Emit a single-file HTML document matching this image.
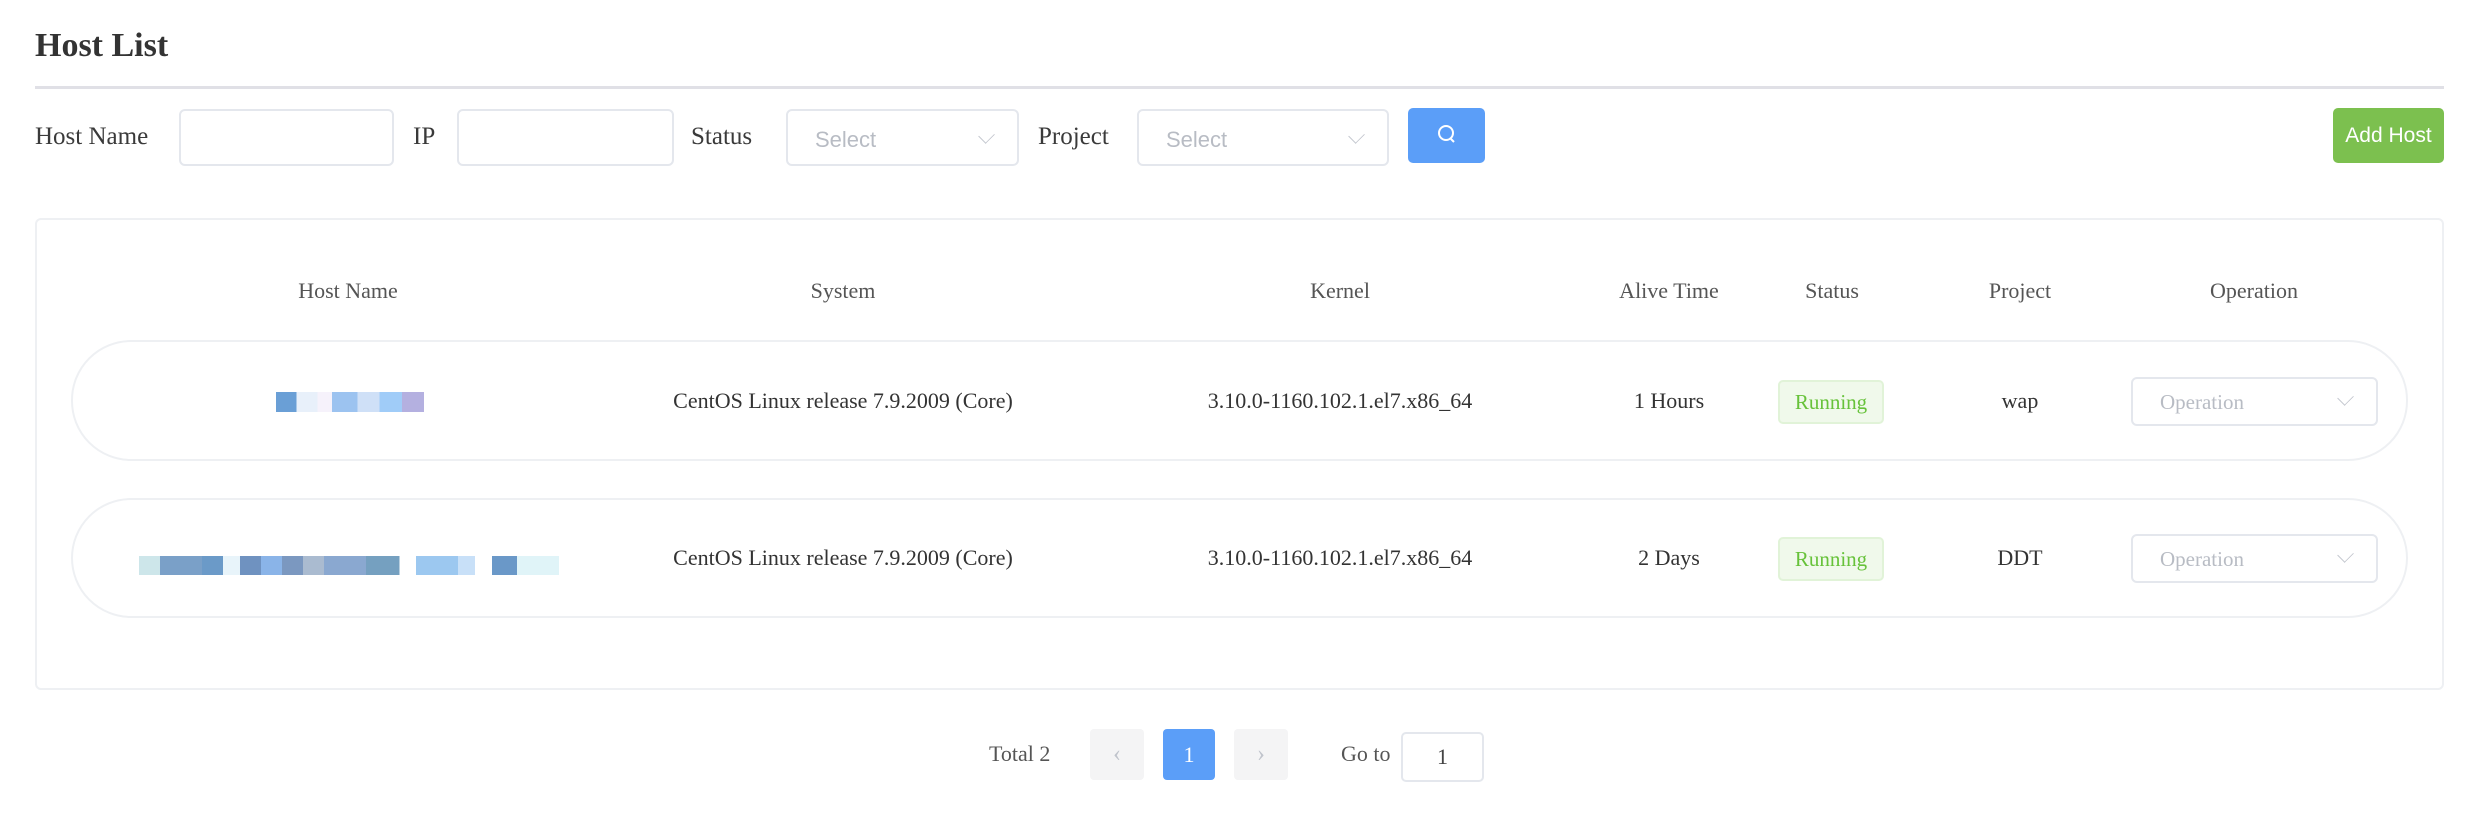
<!DOCTYPE html>
<html><head><meta charset="utf-8"><style>
*{box-sizing:border-box;margin:0;padding:0}
body{width:2480px;height:820px;background:#fff;font-family:"Liberation Serif","DejaVu Serif",serif;color:#333;position:relative;overflow:hidden}
.a{position:absolute}
.lbl{font-size:25px;color:#3a3a3a;line-height:57px;top:108px}
.inp{border:2px solid #e4e7ed;border-radius:6px;height:57px;top:109px;background:#fff}
.ph{color:#b8bcc4;font-family:"Liberation Sans",sans-serif;font-size:22px;position:absolute;left:27px;top:16px}
.chev{position:absolute;right:24px;top:18px;width:13px;height:13px;border-right:1.5px solid #c0c4cc;border-bottom:1.5px solid #c0c4cc;transform:rotate(45deg) scaleX(0.8)}
.th{top:278px;font-size:22px;color:#555;transform:translateX(-50%);white-space:nowrap}
.row{left:71px;width:2337px;border:2px solid #eef0f3;border-radius:60px;background:#fff}
.td{font-size:22px;color:#333;transform:translate(-50%,-50%);white-space:nowrap}
.tag{width:106px;height:44px;background:#f0f9eb;border:2px solid #e1f3d8;border-radius:5px;color:#67c23a;font-size:21px;text-align:center;line-height:40px}
.op{width:247px;height:49px;border:2px solid #e4e7ed;border-radius:6px}
.op .ph{font-size:21px;top:11px;left:27px;font-family:"Liberation Serif",serif;color:#b8bcc4}
.op .chev{top:12px}
.pb{width:54px;height:51px;background:#f4f4f5;border-radius:4px;top:729px;color:#c0c4cc;font-size:24px;text-align:center;line-height:51px}
</style></head><body>
<div class="a" style="left:35px;top:27px;font-size:34px;font-weight:bold;color:#333">Host List</div>
<div class="a" style="left:35px;top:86px;width:2409px;height:3px;background:#e0e0e6"></div>

<div class="a lbl" style="left:35px">Host Name</div>
<div class="a inp" style="left:179px;width:215px"></div>
<div class="a lbl" style="left:413px">IP</div>
<div class="a inp" style="left:457px;width:217px"></div>
<div class="a lbl" style="left:691px">Status</div>
<div class="a inp" style="left:786px;width:233px"><span class="ph">Select</span><span class="chev"></span></div>
<div class="a lbl" style="left:1038px">Project</div>
<div class="a inp" style="left:1137px;width:252px"><span class="ph">Select</span><span class="chev"></span></div>
<div class="a" style="left:1408px;top:108px;width:77px;height:55px;background:#5b9ef8;border-radius:5px">
<svg width="77" height="55"><circle cx="38" cy="25" r="7" fill="none" stroke="#fff" stroke-width="2"/><line x1="43" y1="31" x2="46" y2="34" stroke="#fff" stroke-width="2"/></svg></div>
<div class="a" style="left:2333px;top:108px;width:111px;height:55px;background:#7cc04f;border-radius:5px;color:#fff;font-family:'Liberation Sans',sans-serif;font-size:21px;text-align:center;line-height:55px">Add Host</div>

<div class="a" style="left:35px;top:218px;width:2409px;height:472px;border:2px solid #eef0f3;border-radius:6px"></div>
<div class="a th" style="left:348px">Host Name</div>
<div class="a th" style="left:843px">System</div>
<div class="a th" style="left:1340px">Kernel</div>
<div class="a th" style="left:1669px">Alive Time</div>
<div class="a th" style="left:1832px">Status</div>
<div class="a th" style="left:2020px">Project</div>
<div class="a th" style="left:2254px">Operation</div>

<div class="a row" style="top:340px;height:121px"></div>
<div class="a row" style="top:498px;height:120px"></div>

<div class="a" style="left:276px;top:392px;width:148px;height:20px;background:linear-gradient(90deg,#6a9fd6 0 14%,#e8f0fa 14% 28%,#f6f2fb 28% 38%,#9cc3f0 38% 55%,#cfe0f7 55% 70%,#a0ccf8 70% 85%,#b4b0e0 85%)"></div>
<div class="a" style="left:139px;top:556px;width:420px;height:19px;background:linear-gradient(90deg,#cde6ea 0 5%,#7aa0c8 5% 15%,#6b9ac8 15% 20%,#e8f4fa 20% 24%,#6f92c0 24% 29%,#8ab4e8 29% 34%,#7b98c0 34% 39%,#aabbd0 39% 44%,#8aa8d0 44% 54%,#75a0c0 54% 62%,#fff 62% 66%,#9cc8f0 66% 76%,#c8e0f8 76% 80%,#fff 80% 84%,#6a98c8 84% 90%,#e0f4f8 90%)"></div>

<div class="a td" style="left:843px;top:401px">CentOS Linux release 7.9.2009 (Core)</div>
<div class="a td" style="left:1340px;top:401px">3.10.0-1160.102.1.el7.x86_64</div>
<div class="a td" style="left:1669px;top:401px">1 Hours</div>
<div class="a tag" style="left:1778px;top:380px">Running</div>
<div class="a td" style="left:2020px;top:401px">wap</div>
<div class="a op" style="left:2131px;top:377px"><span class="ph">Operation</span><span class="chev"></span></div>

<div class="a td" style="left:843px;top:558px">CentOS Linux release 7.9.2009 (Core)</div>
<div class="a td" style="left:1340px;top:558px">3.10.0-1160.102.1.el7.x86_64</div>
<div class="a td" style="left:1669px;top:558px">2 Days</div>
<div class="a tag" style="left:1778px;top:537px">Running</div>
<div class="a td" style="left:2020px;top:558px">DDT</div>
<div class="a op" style="left:2131px;top:534px"><span class="ph">Operation</span><span class="chev"></span></div>

<div class="a" style="left:989px;top:741px;font-size:22px;color:#555">Total 2</div>
<div class="a pb" style="left:1090px">&#x2039;</div>
<div class="a pb" style="left:1163px;width:52px;background:#5b9ef8;color:#fff;font-size:22px">1</div>
<div class="a pb" style="left:1234px">&#x203A;</div>
<div class="a" style="left:1341px;top:741px;font-size:22px;color:#555">Go to</div>
<div class="a" style="left:1401px;top:732px;width:83px;height:50px;border:2px solid #e4e7ed;border-radius:5px;text-align:center;line-height:46px;font-size:22px;color:#444">1</div>
</body></html>
